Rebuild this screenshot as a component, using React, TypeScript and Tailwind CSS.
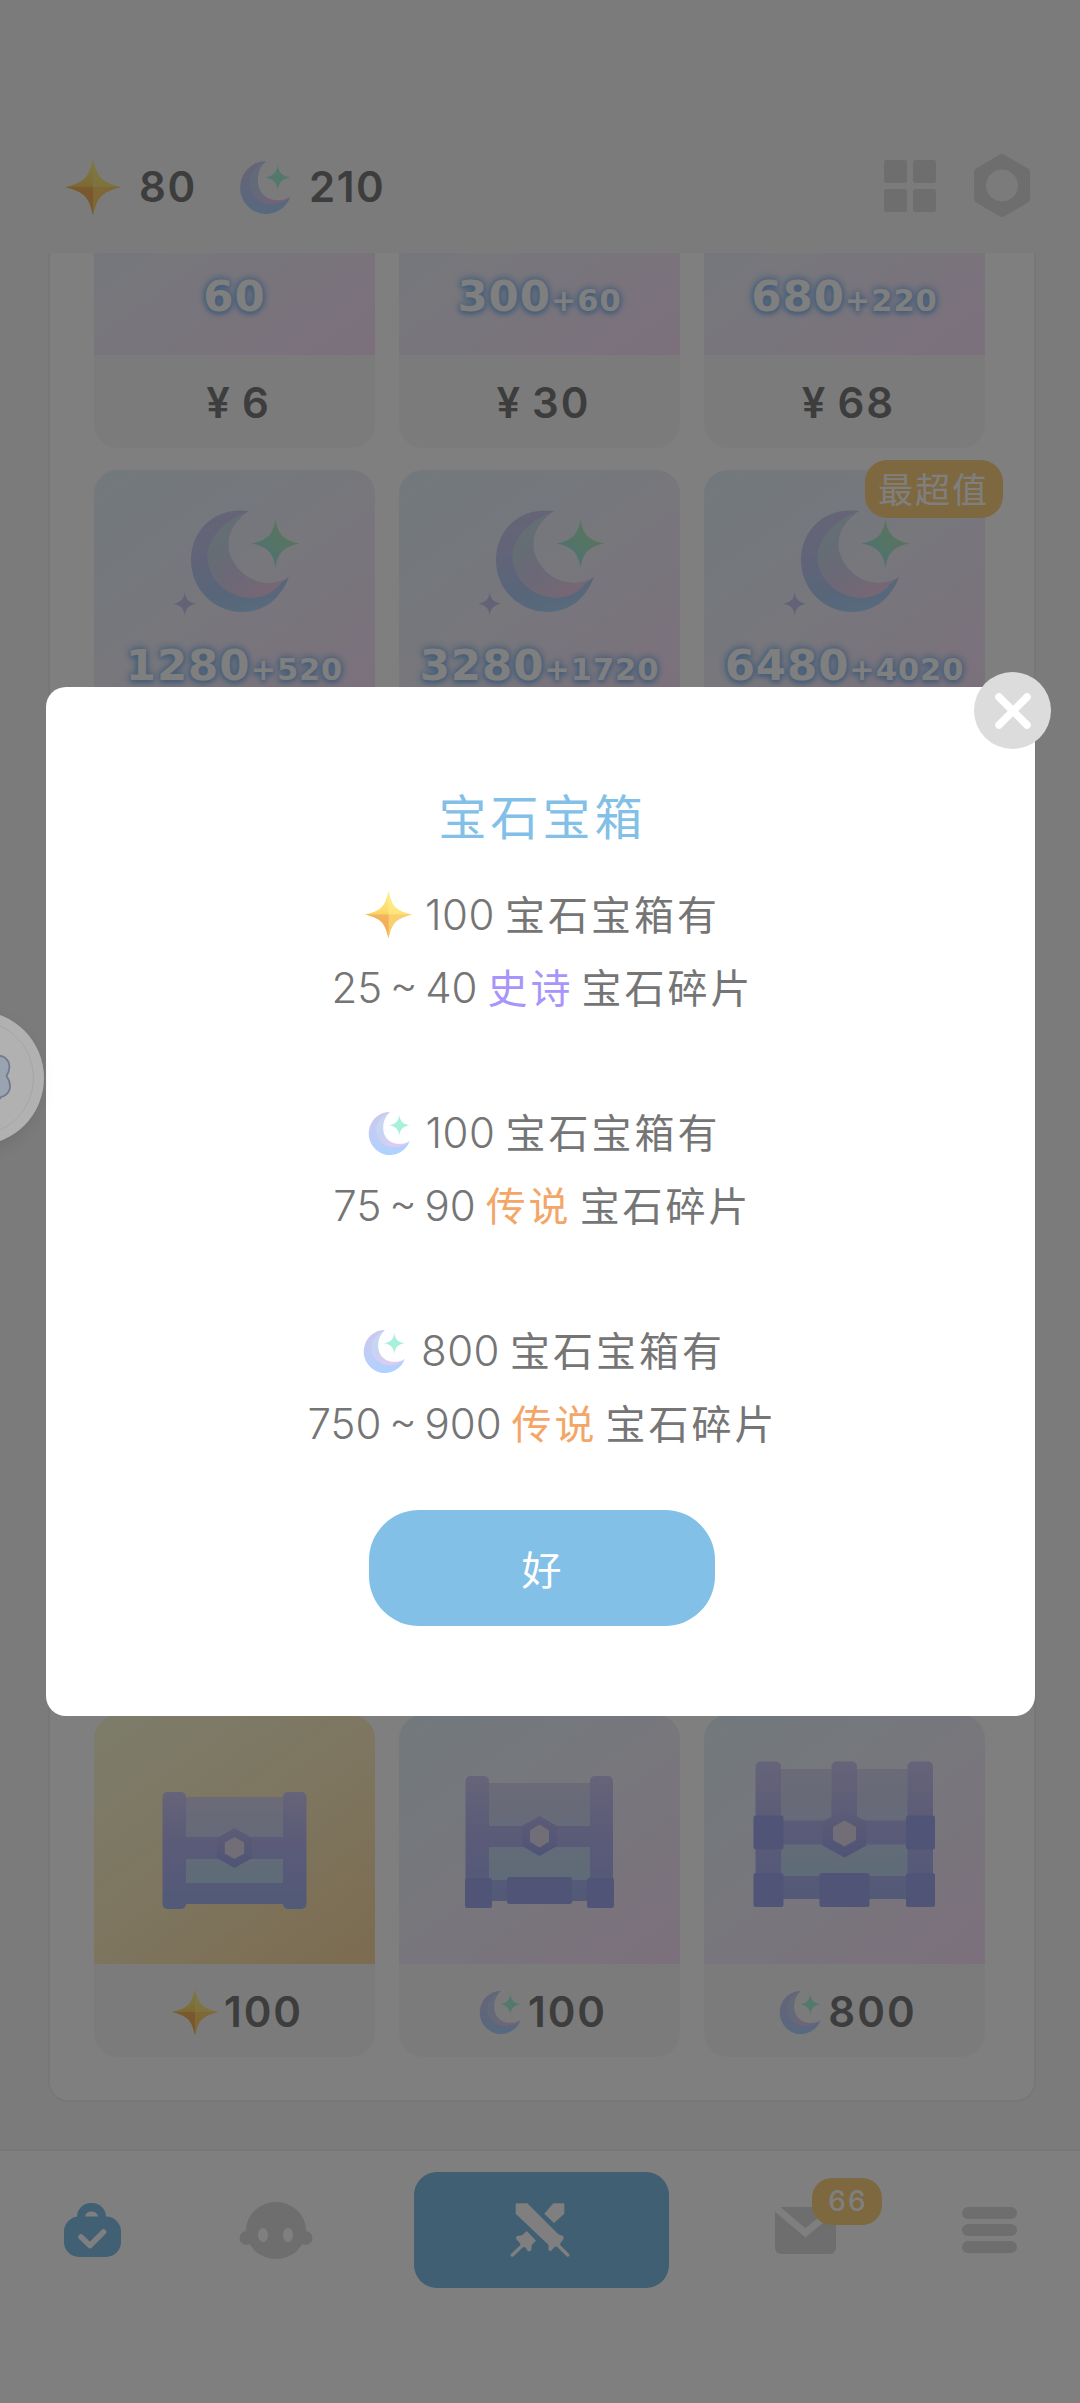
import { useId, type ReactNode } from "react";

const STAR4 = "M50 0 C54 30 66 44 100 50 C66 56 54 70 50 100 C46 70 34 56 0 50 C34 44 46 30 50 0Z";

function GoldStar({ className }: { className: string }) {
  const id = useId();
  return (
    <svg viewBox="0 0 100 100" className={className}>
      <defs>
        <linearGradient id={id} x1="0" y1="0" x2="0" y2="1">
          <stop offset="0" stopColor="#fdf092" />
          <stop offset="0.45" stopColor="#fbd968" />
          <stop offset="0.6" stopColor="#f5b75a" />
          <stop offset="1" stopColor="#f9b95c" />
        </linearGradient>
      </defs>
      <path d="M50 0 C57 30 63 42 100 50 C63 59 57 70 50 100 C43 70 37 59 0 50 C37 42 43 30 50 0Z" fill={`url(#${id})`} />
      <path d="M50 50 L100 50 C63 59 57 70 50 100Z" fill="#fbd06c" />
      <path d="M50 50 L0 50 C37 59 43 70 50 100Z" fill="#f2ae5c" opacity="0.75" />
      <path d="M50 50 L100 50 C63 42 57 30 50 0Z" fill="#fff08a" opacity="0.55" />
    </svg>
  );
}

function MoonIcon({ className }: { className: string }) {
  const id = useId();
  return (
    <svg viewBox="0 0 100 100" className={className}>
      <defs>
        <linearGradient id={id + "o"} x1="0.3" y1="0" x2="0.5" y2="1">
          <stop offset="0" stopColor="#cfc8ee" />
          <stop offset="1" stopColor="#aed2ff" />
        </linearGradient>
        <linearGradient id={id + "i"} x1="0" y1="0" x2="0.7" y2="1">
          <stop offset="0" stopColor="#c3dcee" />
          <stop offset="0.5" stopColor="#c6d3f4" />
          <stop offset="1" stopColor="#e6c8ee" />
        </linearGradient>
      </defs>
      <path d="M52 2 A48 49 0 1 0 97 68 C80 84 46 78 37 52 C31 32 40 12 52 2Z" fill={`url(#${id}o)`} />
      <path d="M52 2 C20 18 12 48 32 70 C50 88 80 84 97 68 C78 80 48 76 39 52 C33 32 40 12 52 2Z" fill={`url(#${id}i)`} />
      <path d={STAR4} transform="translate(50 9) scale(.47)" fill="#a6f0dc" />
    </svg>
  );
}

function BigMoon() {
  const id = useId();
  return (
    <svg viewBox="0 0 128 106" className="ml-[4px] h-[106px] w-[128px]">
      <defs>
        <linearGradient id={id + "o"} x1="0.3" y1="0" x2="0.5" y2="1">
          <stop offset="0" stopColor="#cdc8ee" />
          <stop offset="0.4" stopColor="#c4c8f2" />
          <stop offset="0.8" stopColor="#b0ccf4" />
          <stop offset="1" stopColor="#b0d4fa" />
        </linearGradient>
        <linearGradient id={id + "i"} x1="0" y1="0" x2="0.8" y2="1">
          <stop offset="0" stopColor="#ccdcf0" />
          <stop offset="0.3" stopColor="#c8dce8" />
          <stop offset="0.55" stopColor="#d6d2ee" />
          <stop offset="1" stopColor="#f2cee8" />
        </linearGradient>
        <linearGradient id={id + "s"} x1="1" y1="0" x2="0" y2="1">
          <stop offset="0.2" stopColor="#b4eab8" />
          <stop offset="0.8" stopColor="#9ce6e2" />
        </linearGradient>
      </defs>
      <path d="M76 1 C40 -4 18 22 18 50 C18 80 42 102 69 102 C92 102 108 88 116 67 C100 78 76 74 63 56 C48 35 56 14 76 1Z" fill={`url(#${id}o)`} />
      <path d="M76 1 C36 16 24 48 44 72 C60 91 92 94 107 74 L116 67 C100 78 76 74 63 56 C48 35 56 14 76 1Z" fill={`url(#${id}i)`} />
      <path d={STAR4} transform="translate(78 9) scale(.49)" fill={`url(#${id}s)`} />
      <path d={STAR4} transform="translate(0 82) scale(.235)" fill="#c4c6ee" />
    </svg>
  );
}

type Box = [number, number, number, number];

interface ChestSpec {
  pillars: Box[];
  lid: Box;
  band: Box;
  belly: Box;
  base: Box;
  feet: Box[];
  gem: { x: number; y: number; w: number; h: number; iw: number; ih: number };
}

function hexPoints(x: number, y: number, w: number, h: number) {
  return `${x},${y - h} ${x + w},${y - h / 2} ${x + w},${y + h / 2} ${x},${y + h} ${x - w},${y + h / 2} ${x - w},${y - h / 2}`;
}

const CHESTS: ChestSpec[] = [
  {
    pillars: [[68.5, 77, 23.5, 117], [189, 77, 23.5, 117]],
    lid: [91, 82, 99, 41],
    band: [91, 122, 99, 22],
    belly: [91, 144, 99, 25],
    base: [91, 168, 99, 21],
    feet: [],
    gem: { x: 140.5, y: 133, w: 17.5, h: 20, iw: 9.7, ih: 11 },
  },
  {
    pillars: [[66.5, 61, 23.5, 130], [191, 61, 23, 130]],
    lid: [89, 68, 103, 43],
    band: [89, 111, 103, 21],
    belly: [89, 132, 103, 34],
    base: [89, 165, 103, 21],
    feet: [[66, 163, 27, 30], [108, 162, 65, 27], [188, 163, 27, 30]],
    gem: { x: 140.5, y: 121, w: 17.5, h: 20, iw: 9.5, ih: 11.5 },
  },
  {
    pillars: [[51.5, 46.5, 25.5, 142], [127.5, 46.5, 25.5, 60], [203.5, 46.5, 25.5, 142]],
    lid: [76, 54, 128, 52],
    band: [76, 105.5, 128, 24],
    belly: [76, 129, 128, 33],
    base: [76, 161, 128, 23],
    feet: [[49.5, 100.5, 30, 34], [202, 100.5, 29, 34], [49.5, 158, 30, 34], [202, 158, 29, 34], [115.5, 158, 50, 34]],
    gem: { x: 140.5, y: 118.5, w: 22, h: 24, iw: 11.5, ih: 13 },
  },
];

function Chest({ spec }: { spec: ChestSpec }) {
  const id = useId();
  const top = spec.pillars[0][1];
  const rect = (b: Box, fill: string, rx = 0, key?: number) => (
    <rect key={key} x={b[0]} y={b[1]} width={b[2]} height={b[3]} rx={rx} fill={fill} />
  );
  return (
    <svg viewBox="0 0 281 249" className="h-[249px] w-[281px]">
      <defs>
        <linearGradient id={id + "p"} gradientUnits="userSpaceOnUse" x1="0" y1={top} x2="0" y2="194">
          <stop offset="0" stopColor="#ccc8f2" />
          <stop offset="0.45" stopColor="#b6b6f0" />
          <stop offset="1" stopColor="#a2b4f0" />
        </linearGradient>
        <linearGradient id={id + "l"} gradientUnits="userSpaceOnUse" x1="0" y1={top} x2="0" y2="169">
          <stop offset="0" stopColor="#d8d6f0" />
          <stop offset="0.45" stopColor="#ced4f0" />
          <stop offset="1" stopColor="#bcd8f0" />
        </linearGradient>
        <linearGradient id={id + "g"} x1="0" y1="0" x2="0" y2="1">
          <stop offset="0" stopColor="#bcb8ee" />
          <stop offset="1" stopColor="#9ea8ec" />
        </linearGradient>
      </defs>
      {rect(spec.lid, `url(#${id}l)`)}
      {rect(spec.belly, `url(#${id}l)`)}
      {rect(spec.band, `url(#${id}p)`)}
      {rect(spec.base, `url(#${id}p)`)}
      {spec.pillars.map((p, i) => rect(p, `url(#${id}p)`, 5, i))}
      {spec.feet.map((p, i) => rect(p, "#a0a8ec", 2.5, i))}
      <polygon points={hexPoints(spec.gem.x, spec.gem.y, spec.gem.w, spec.gem.h)} fill={`url(#${id}g)`} />
      <polygon points={hexPoints(spec.gem.x, spec.gem.y, spec.gem.iw, spec.gem.ih)} fill="#e2dcf0" />
    </svg>
  );
}

function ShopCard({ art, gold, footer, badge }: { art: ReactNode; gold?: boolean; footer?: ReactNode; badge?: string }) {
  return (
    <div className="relative w-[281px]">
      <div className="overflow-hidden rounded-[24px] bg-[#f7f7f7]">
        <div
          className={
            gold
              ? "h-[249px] bg-linear-145 from-[#fafad6] via-[#fcecc0] to-[#f8d8a0]"
              : "h-[249px] bg-linear-145 from-[#e4f2fa] via-[#efeef8] to-[#f8e0f8]"
          }
        >
          {art}
        </div>
        <div className="flex h-[93px] items-center justify-center pt-[2px] pl-[6px] text-[42px] font-semibold tracking-[2px] text-[#7a7a7a]">{footer}</div>
      </div>
      {badge && (
        <div className="absolute -top-[10px] -right-[18px] flex h-[58px] w-[138px] items-center justify-center rounded-[22px] bg-[#fbd080] pr-[1px] pb-[2px] font-[Noto_Sans_CJK_SC,sans-serif] text-[35px] tracking-[2px] text-white">
          {badge}
        </div>
      )}
    </div>
  );
}

function MoonPack({ amount, bonus, raised }: { amount: string; bonus?: string; raised: boolean }) {
  return (
    <div className={raised ? "flex h-full flex-col items-center pt-[35px]" : "flex h-full flex-col items-center pt-[40px]"}>
      <BigMoon />
      <div className="mt-[22px] flex items-baseline font-['DejaVu_Sans',sans-serif] text-[43.5px] leading-[54px] font-bold tracking-[0.9px] text-white [text-shadow:0_0_6px_#8fbcf0,0_0_10px_#8fbcf0,0_2px_4px_#8fbcf0]">
        {amount}
        {bonus && <span className="text-[30.5px]">+{bonus}</span>}
      </div>
    </div>
  );
}

interface Pack {
  amount: string;
  bonus?: string;
  price?: string;
  badge?: string;
}

const PACKS: Pack[][] = [
  [
    { amount: "60", price: "6" },
    { amount: "300", bonus: "60", price: "30" },
    { amount: "680", bonus: "220", price: "68" },
  ],
  [
    { amount: "1280", bonus: "520" },
    { amount: "3280", bonus: "1720" },
    { amount: "6480", bonus: "4020", badge: "最超值" },
  ],
];

function Header() {
  return (
    <header className="flex h-[253px] items-start justify-between px-[50px] pt-[154px] text-[42px] font-semibold tracking-[1.5px] text-[#7a7a7a]">
      <div className="flex h-[65px] items-center pl-[15px]">
        <GoldStar className="size-[56px]" />
        <span className="ml-[18px] w-[99px]">80</span>
        <MoonIcon className="size-[54px]" />
        <span className="ml-[17px]">210</span>
      </div>
      <div className="flex h-[63px] items-center">
        <svg viewBox="0 0 52 52" className="mr-[38px] size-[52px]" fill="#dcdcdc">
          <rect width="23" height="23" rx="2.5" />
          <rect x="29" width="23" height="23" rx="2.5" />
          <rect y="29" width="23" height="23" rx="2.5" />
          <rect x="29" y="29" width="23" height="23" rx="2.5" />
        </svg>
        <svg viewBox="0 0 56 63" className="h-[63px] w-[56px]" fill="#dcdcdc" fillRule="evenodd">
          <path d="M26 .6 Q28 -.4 30 .6 L54 14.5 Q56 15.8 56 18 V45 Q56 47.2 54 48.5 L30 62.4 Q28 63.4 26 62.4 L2 48.5 Q0 47.2 0 45 V18 Q0 15.8 2 14.5Z M28 15.5 a16 16 0 1 0 .01 0Z" />
        </svg>
      </div>
    </header>
  );
}

function SwordsIcon() {
  return (
    <svg viewBox="60 65 180 174" className="mr-[4px] h-[58px] w-[60px]" fill="#fff">
      <path d="M80 72 H112 L205 165 L217 169 Q224 173 219 181 L212 190 L208 202 L194 202 L184 214 Q177 218 175 209 L176 197 L77 103 V75 Q77 72 80 72Z" />
      <path d="M200 194 L233 227 M102 194 L67 227" stroke="#fff" strokeWidth="10" strokeLinecap="round" />
      <path d="M190 72 H220 Q223 72 223 76 V103 L192 131 L163 103Z" />
      <path d="M110 155 L138 184 L125 197 L124 212 Q120 218 113 214 L106 204 L93 203 L90 192 L79 180 Q76 171 84 169 L96 168Z" />
    </svg>
  );
}

function NavBar() {
  return (
    <nav className="flex h-[254px] items-start border-t-2 border-[#eeeeee] bg-white">
      <div className="flex h-[158px] w-full items-center">
        <svg viewBox="0 0 57 54" className="ml-[64px] h-[54px] w-[57px]">
          <path d="M13 20 V14 A14 14 0 0 1 27 0 H28 A14 14 0 0 1 42 14 V20Z" fill="#82c0e8" />
          <rect y="13.500" width="57" height="40.500" rx="15" fill="#82c0e8" />
          <path d="M21 13.500 Q22 8.500 27.500 8.500 Q33 8.500 34 13.500Z" fill="#fff" />
          <path d="M17 34 L26 42.500 L39.500 29" fill="none" stroke="#fff" strokeWidth="5.500" strokeLinecap="round" strokeLinejoin="round" />
        </svg>
        <svg viewBox="0 0 74 57" className="ml-[118px] h-[57px] w-[74px]" fill="#dcdcdc">
          <ellipse cx="37" cy="28.500" rx="30" ry="28.500" />
          <circle cx="7.500" cy="36" r="7" />
          <circle cx="66.500" cy="36" r="7" />
          <ellipse cx="24" cy="33" rx="5" ry="7" fill="#fff" />
          <ellipse cx="49" cy="33" rx="5" ry="7" fill="#fff" />
        </svg>
        <div className="ml-[101px] flex h-[116px] w-[255px] items-center justify-center rounded-[23px] bg-[#80bee6]">
          <SwordsIcon />
        </div>
        <div className="relative ml-[106px] h-[47px] w-[61px]">
          <svg viewBox="0 0 61 47" className="h-[47px] w-[61px]">
            <rect width="61" height="47" rx="6" fill="#dcdcdc" />
            <path d="M1 1 L30.500 26 L60 1" fill="none" stroke="#fff" strokeWidth="7" />
          </svg>
          <div className="absolute -top-[29px] left-[37px] flex h-[47px] w-[70px] items-center justify-center rounded-[20px] bg-[#fbd080] pl-[2px] text-[28px] font-medium tracking-[2px] text-white">66</div>
        </div>
        <div className="ml-[126px] flex flex-col gap-[5px]">
          <span className="h-[12px] w-[55px] rounded-full bg-[#dcdcdc]" />
          <span className="h-[12px] w-[55px] rounded-full bg-[#dcdcdc]" />
          <span className="h-[12px] w-[55px] rounded-full bg-[#dcdcdc]" />
        </div>
      </div>
    </nav>
  );
}

function FloatingBall() {
  return (
    <svg viewBox="0 0 84 190" className="absolute top-[983px] left-0 h-[190px] w-[84px]">
      <defs>
        <filter id="ballShadow" x="-50%" y="-50%" width="200%" height="200%">
          <feGaussianBlur stdDeviation="9" />
        </filter>
      </defs>
      <circle cx="-29" cy="101" r="68" fill="#000" opacity="0.1" filter="url(#ballShadow)" />
      <circle cx="-23" cy="95" r="67" fill="#b1b1b1" />
      <circle cx="-24" cy="95" r="57.500" fill="none" stroke="#a6a6a6" strokeWidth="1" />
      <path d="M-8 74 Q4 70 8.500 79 Q11 86 6.500 93 Q12 101 9 108 Q6 113 1 114 L-3 120 L-20 100Z" fill="#9aa3b0" stroke="#737b90" strokeWidth="1.800" />
    </svg>
  );
}

function Hanzi({ children, className }: { children: string; className: string }) {
  return <span className={"relative -top-[2px] font-[Noto_Sans_CJK_SC,sans-serif] text-[40px] tracking-[3px] " + className}>{children}</span>;
}

function OddsBlock({ icon, cost, range, tier, tierClass }: { icon: ReactNode; cost: string; range: string; tier: string; tierClass: string }) {
  return (
    <div className="flex flex-col items-center">
      <div className="flex h-[73px] items-center">
        {icon}
        <span className="ml-[13px] font-light">{cost}</span>
        <Hanzi className="ml-[10px]">宝石宝箱有</Hanzi>
      </div>
      <div className="flex h-[73px] items-center">
        <span className="font-light tracking-[0px] [word-spacing:-4px]">{range}</span>
        <Hanzi className={"ml-[10px] " + tierClass}>{tier}</Hanzi>
        <Hanzi className="ml-[8px]">宝石碎片</Hanzi>
      </div>
    </div>
  );
}

function ChestModal() {
  return (
    <div className="absolute top-[687px] left-[46px] flex h-[1029px] w-[989px] flex-col items-center rounded-[20px] bg-white pl-[2px]">
      <button className="absolute -top-[15px] -right-[16px] flex size-[77px] items-center justify-center rounded-full bg-[#dcdcdc]" aria-label="关闭">
        <svg viewBox="0 0 36 36" className="size-[36px]">
          <path d="M4 4 L32 32 M32 4 L4 32" stroke="#fff" strokeWidth="7.500" strokeLinecap="round" />
        </svg>
      </button>
      <h2 className="mt-[87px] pl-[2px] font-[Noto_Sans_CJK_SC,sans-serif] text-[48px] leading-[80px] tracking-[4px] text-[#82c0e8]">宝石宝箱</h2>
      <div className="mt-[24px] flex flex-col gap-[72px] pl-[2px] text-[42px] leading-[60px] tracking-[0.5px] text-[#757575]">
        <OddsBlock icon={<GoldStar className="size-[47px]" />} cost="100" range="25 ~ 40" tier="史诗" tierClass="text-[#a895fb]" />
        <OddsBlock icon={<MoonIcon className="mx-[2px] size-[44px]" />} cost="100" range="75 ~ 90" tier="传说" tierClass="text-[#f3a668]" />
        <OddsBlock icon={<MoonIcon className="mx-[2px] size-[44px]" />} cost="800" range="750 ~ 900" tier="传说" tierClass="text-[#f3a668]" />
      </div>
      <button className="mt-[50px] flex h-[116px] w-[346px] items-center justify-center rounded-[50px] bg-[#82c0e8] font-[Noto_Sans_CJK_SC,sans-serif] text-[40px] text-white">好</button>
    </div>
  );
}

export default function App() {
  return (
    <div className="relative flex h-[2403px] w-[1080px] flex-col overflow-hidden bg-[#f7f7f7] font-[Inter,sans-serif]">
      <Header />
      <main className="h-[1896px] overflow-hidden">
        <div className="mr-[44px] ml-[48px] h-[1849px] overflow-hidden rounded-b-[20px] border-x-2 border-b-2 border-[#efefef] bg-white">
          <div className="-mt-[147px] flex flex-col pr-[49px] pl-[44px]">
            {PACKS.map((row, i) => (
              <div key={i} className="mb-[22px] flex justify-between">
                {row.map((p) => (
                  <ShopCard
                    key={p.amount}
                    art={<MoonPack amount={p.amount} bonus={p.bonus} raised={i === 0} />}
                    badge={p.badge}
                    footer={
                      p.price && (
                        <span className="flex pl-[2px]">
                          <span className="mr-[10px]">¥</span>
                          {p.price}
                        </span>
                      )
                    }
                  />
                ))}
              </div>
            ))}
            <div className="mt-[881px] flex justify-between">
              {CHESTS.map((spec, i) => (
                <ShopCard
                  key={spec.gem.y}
                  gold={i === 0}
                  art={<Chest spec={spec} />}
                  footer={
                    <>
                      {i === 0 ? <GoldStar className="size-[46px]" /> : <MoonIcon className="size-[44px]" />}
                      <span className="ml-[6px]">{i === 2 ? "800" : "100"}</span>
                    </>
                  }
                />
              ))}
            </div>
          </div>
        </div>
      </main>
      <NavBar />
      <div className="absolute inset-0 bg-black/50" />
      <ChestModal />
      <FloatingBall />
    </div>
  );
}
